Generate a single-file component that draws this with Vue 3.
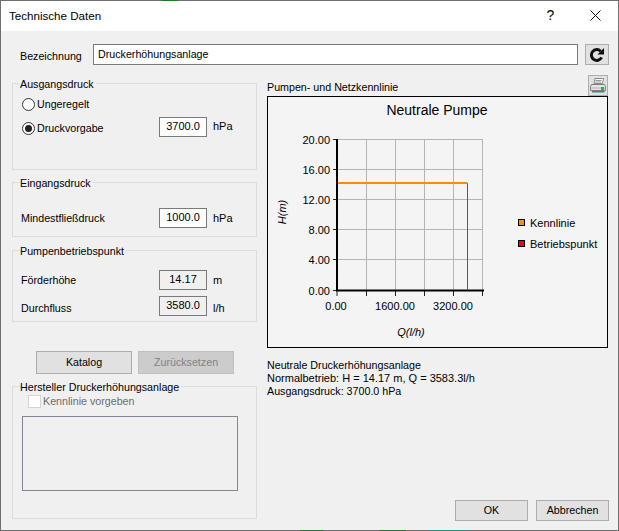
<script setup>
const gridX = [366.5, 395.5, 424.5, 453.5, 482.5]
const gridY = [139.5, 169.5, 199.5, 229.5, 259.5]
const ticksX = [337, 366.5, 395.5, 424.5, 453.5, 482.5]
const labelsY = [
  { t: '20.00', y: 140 }, { t: '16.00', y: 170 }, { t: '12.00', y: 200 },
  { t: '8.00', y: 230 }, { t: '4.00', y: 260 }, { t: '0.00', y: 291 }
]
const labelsX = [
  { t: '0.00', x: 336 }, { t: '1600.00', x: 395 }, { t: '3200.00', x: 453 }
]
const slivers = [
  { left: 161, width: 16, top: -1, color: '#1e7a1e' },
  { left: 299, width: 23, top: 529, color: '#1e7a1e' },
  { left: 378, width: 27, top: 529, color: '#1e7a1e' },
  { left: 426, width: 44, top: 529, color: '#2a8f80' }
]
</script>

<template>
  <div class="window">
    <i
      v-for="s in slivers"
      :key="s.left"
      class="sliver"
      :style="{ left: s.left + 'px', width: s.width + 'px', top: s.top + 'px', background: s.color }"
    ></i>
    <header class="titlebar">
      <span class="title">Technische Daten</span>
      <span class="help">?</span>
      <svg class="close" width="11" height="11" viewBox="0 0 11 11">
        <path d="M.5.5l10 10M10.500.5l-10 10" stroke="#111" fill="none" />
      </svg>
    </header>

    <main class="content">
      <div class="name-row">
        <label class="name-label">Bezeichnung</label>
        <div class="field name-field">Druckerhöhungsanlage</div>
        <button class="icon-btn refresh">
          <svg width="18" height="18" viewBox="0 0 18 18">
            <path d="M13.600 11.400A5.400 5.400 0 1 1 12.600 5.200" fill="none" stroke="#111" stroke-width="3" />
            <path d="M16 2V8.600H9.400Z" fill="#111" />
          </svg>
        </button>
      </div>

      <div class="columns">
        <section class="left">
          <div class="group g-out">
            <span class="group-title">Ausgangsdruck</span>
            <div class="radio-row first">
              <span class="radio"></span>
              <span>Ungeregelt</span>
            </div>
            <div class="radio-row second">
              <span class="radio on"></span>
              <span class="grow">Druckvorgabe</span>
              <div class="field num">3700.0</div>
              <span class="unit up">hPa</span>
            </div>
          </div>

          <div class="group g-in">
            <span class="group-title">Eingangsdruck</span>
            <div class="row">
              <span class="grow">Mindestfließdruck</span>
              <div class="field num">1000.0</div>
              <span class="unit">hPa</span>
            </div>
          </div>

          <div class="group g-pump">
            <span class="group-title">Pumpenbetriebspunkt</span>
            <div class="row">
              <span class="grow">Förderhöhe</span>
              <div class="field num readonly">14.17</div>
              <span class="unit">m</span>
            </div>
            <div class="row row-2">
              <span class="grow">Durchfluss</span>
              <div class="field num readonly">3580.0</div>
              <span class="unit">l/h</span>
            </div>
          </div>

          <div class="actions">
            <button class="btn wide">Katalog</button>
            <button class="btn wide disabled">Zurücksetzen</button>
          </div>

          <div class="group g-maker">
            <span class="group-title">Hersteller Druckerhöhungsanlage</span>
            <div class="check-row">
              <span class="check"></span>
              <span>Kennlinie vorgeben</span>
            </div>
            <div class="memo"></div>
          </div>
        </section>

        <section class="right">
          <div class="chart-head">
            <span>Pumpen- und Netzkennlinie</span>
            <button class="icon-btn print">
              <svg width="18" height="18" viewBox="0 0 18 18">
                <path d="M6 1.500h8.500l-1 5H5z" fill="#fff" stroke="#8a8a8a" />
                <path d="M6.500 3.500h6M6.200 5h6" stroke="#9a9a9a" />
                <path d="M2.500 7.500h13l1 2v4h-15V9.500z" fill="#e4e4e4" stroke="#7f7f7f" />
                <path d="M1.500 11h15" stroke="#b0b0b0" />
                <path d="M3 14h12.500v1.500H3z" fill="#2f8f8f" />
                <rect x="12" y="10" width="3" height="3" fill="#19c419" />
              </svg>
            </button>
          </div>

          <div class="chart">
            <svg class="plot" width="341" height="252" viewBox="267 96 341 252">
              <text x="437" y="115" text-anchor="middle" class="chart-title">Neutrale Pumpe</text>

              <g stroke="#b4b4b4" fill="none">
                <path v-for="x in gridX" :key="x" :d="`M${x} 139V290`" />
                <path v-for="y in gridY" :key="y" :d="`M337 ${y}H483`" />
              </g>
              <g stroke="#222" fill="none">
                <path v-for="x in ticksX" :key="x" :d="`M${x} 290V296`" />
                <path d="M333 139.500h4M333 169.500h4M333 199.500h4M333 229.500h4M333 259.500h4M333 290.500h4" />
              </g>

              <path d="M337 139V291" stroke="#000" stroke-width="2" />
              <path d="M336 290.500H484" stroke="#000" stroke-width="2" />
              <path d="M467.500 183V290" stroke="#e02020" />
              <path d="M338 183H467.500" stroke="#ff8c00" stroke-width="2" />

              <text v-for="l in labelsY" :key="l.t" x="330" :y="l.y + 4" text-anchor="end" class="tick">{{ l.t }}</text>
              <text v-for="l in labelsX" :key="l.t" :x="l.x" y="310" text-anchor="middle" class="tick">{{ l.t }}</text>

              <text x="411" y="336" text-anchor="middle" class="axis">Q(l/h)</text>
              <text transform="translate(286 212) rotate(-90)" text-anchor="middle" class="axis">H(m)</text>

              <rect x="518.500" y="219.500" width="6" height="6" fill="#ff8c00" stroke="#000" />
              <text x="530" y="227" class="tick">Kennlinie</text>
              <rect x="518.500" y="240.500" width="6" height="6" fill="#ff0000" stroke="#000" />
              <text x="530" y="248" class="tick">Betriebspunkt</text>
            </svg>
          </div>

          <div class="info">
            <div>Neutrale Druckerhöhungsanlage</div>
            <div class="info-nums">Normalbetrieb: H = 14.17 m, Q = 3583.3l/h</div>
            <div>Ausgangsdruck: 3700.0 hPa</div>
          </div>

          <div class="footer">
            <button class="btn small">OK</button>
            <button class="btn small">Abbrechen</button>
          </div>
        </section>
      </div>
    </main>
  </div>
</template>

<style>
html, body { margin: 0; background: #f0f0f0; }
</style>

<style scoped>
.window {
  box-sizing: border-box;
  width: 619px;
  height: 531px;
  border: 1px solid #6f6f6f;
  background: #f0f0f0;
  display: flex;
  flex-direction: column;
  font-family: "Liberation Sans", "Noto Sans", sans-serif;
  font-size: 10.7px;
  line-height: 13px;
  color: #000;
  position: relative;
}
.sliver { position: absolute; height: 1px; }
.titlebar {
  flex: none;
  box-sizing: border-box;
  height: 30px;
  padding: 0 0 2px 8px;
  background: #fff;
  display: flex;
  align-items: center;
  font-size: 11.6px;
}
.title { flex: 1; }
.help { width: 13px; margin-right: 33px; text-align: center; font-size: 14px; }
.close { margin-right: 17px; }

.content {
  flex: 1;
  display: flex;
  flex-direction: column;
  padding: 13px 9px 9px 11px;
  min-height: 0;
}
.name-row { display: flex; align-items: center; height: 21px; }
.name-label { width: 73px; margin-left: 8px; flex: none; position: relative; top: 2px; }
.field {
  box-sizing: border-box;
  background: #fff;
  border: 1px solid #7a7a7a;
  display: flex;
  align-items: center;
}
.name-field { width: 485px; height: 21px; padding-left: 4px; padding-bottom: 1px; }
.icon-btn {
  box-sizing: border-box;
  padding: 0;
  background: #e1e1e1;
  border: 1px solid #adadad;
  display: flex;
  align-items: center;
  justify-content: center;
}
.refresh { width: 24px; height: 21px; margin-left: 7px; }

.columns { display: flex; flex: 1; min-height: 0; margin-top: 18px; }
.left { width: 245px; flex: none; display: flex; flex-direction: column; }
.right { width: 342px; margin-left: 10px; margin-top: -8px; display: flex; flex-direction: column; flex: none; }

.group {
  box-sizing: border-box;
  border: 1px solid #dcdcdc;
  position: relative;
}
.group-title {
  position: absolute;
  left: 7px;
  top: -6px;
  background: #f0f0f0;
  padding-right: 2px;
  white-space: nowrap;
}
.g-out { height: 87px; padding: 0 0 0 9px; }
.g-in { height: 55px; margin-top: 12px; padding: 25px 0 0 8px; }
.g-pump { height: 72px; margin-top: 13px; padding: 19px 0 0 8px; }
.g-maker { height: 133px; margin-top: 12px; }

.row { display: flex; align-items: center; height: 20px; }
.row-2 { margin-top: 6px; padding-top: 0; }
.row-2 > .grow, .row-2 > .unit { padding-top: 4px; }
.grow { flex: 1; }
.num {
  width: 48px;
  height: 20px;
  flex: none;
  justify-content: center;
  padding-bottom: 2px;
  font-size: 11px;
}
.readonly { background: #f0f0f0; }
.unit { width: 43px; padding-left: 6px; flex: none; font-size: 11px; }
.up { padding-bottom: 2px; }

.radio-row { display: flex; align-items: center; height: 20px; }
.radio-row.first { margin-top: 10px; }
.radio-row.second { margin-top: 3px; }
.radio-row.second > .radio, .radio-row.second > .grow { margin-top: 2px; }
.radio {
  box-sizing: border-box;
  width: 13px;
  height: 13px;
  margin-right: 2px;
  border: 1px solid #333;
  border-radius: 50%;
  background: #fff;
  flex: none;
  display: flex;
  align-items: center;
  justify-content: center;
}
.radio.on::after {
  content: "";
  width: 7px;
  height: 7px;
  border-radius: 50%;
  background: #222;
}

.actions { display: flex; gap: 6px; padding-left: 24px; margin-top: 29px; }
.btn {
  box-sizing: border-box;
  background: #e1e1e1;
  border: 1px solid #adadad;
  font: inherit;
  color: #000;
  padding: 0 0 1px;
}
.wide { width: 96px; height: 23px; }
.disabled { background: #cccccc; border-color: #bfbfbf; color: #838383; }

.check-row { display: flex; align-items: center; padding-left: 15px; margin-top: 8px; color: #6d6d6d; height: 13px; }
.check {
  box-sizing: border-box;
  width: 13px;
  height: 13px;
  background: #fff;
  border: 1px solid #d4d4d4;
  margin-right: 2px;
}
.memo {
  box-sizing: border-box;
  width: 216px;
  height: 75px;
  margin: 8px 0 0 9px;
  border: 1px solid #828790;
  background: #f0f0f0;
}

.chart-head {
  height: 21px;
  display: flex;
  justify-content: space-between;
  align-items: flex-end;
}
.chart-head > span { padding-bottom: 2px; }
.print { width: 20px; height: 21px; margin-right: 1px; }
.chart {
  box-sizing: border-box;
  width: 341px;
  height: 252px;
  outline: 1px solid #000;
  outline-offset: -1px;
  background: #f4f4f4;
}
.plot { display: block; }
.chart-title { font-size: 14px; fill: #000; }
.tick { font-size: 11px; fill: #000; }
.axis { font-size: 11px; font-style: italic; fill: #000; }

.info { margin-top: 11px; }
.info-nums { font-size: 11px; }
.footer {
  margin-top: auto;
  display: flex;
  justify-content: flex-end;
  gap: 8px;
}
.small { width: 73px; height: 21px; }
</style>
